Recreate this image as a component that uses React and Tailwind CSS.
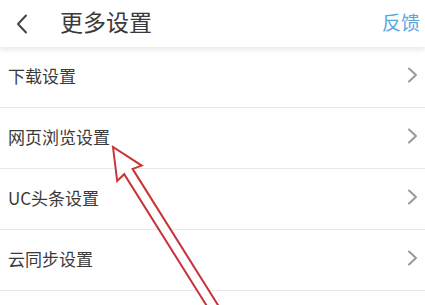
import React from "react";

const rows = ["下载设置", "网页浏览设置", "UC头条设置", "云同步设置", "其他设置"];

function Chevron() {
  return (
    <svg width="12" height="16" viewBox="0 0 12 16" className="shrink-0">
      <polyline points="2,1.5 9,8 2,14.5" fill="none" stroke="#9a9a9a" strokeWidth="2" strokeLinecap="round" strokeLinejoin="round" />
    </svg>
  );
}

export default function App() {
  return (
    <div
      className="relative w-[425px] h-[305px] overflow-hidden bg-white"
      style={{ fontFamily: '"Noto Sans CJK SC", "Noto Sans", sans-serif' }}
    >
      <div className="relative z-10 flex h-[47px] items-center bg-white pl-[16px] pr-[5px] shadow-[0_3px_5px_rgba(0,0,0,0.09)]">
        <svg width="12" height="20" viewBox="0 0 12 20" className="shrink-0">
          <polyline points="10,1.5 2,10 10,18.5" fill="none" stroke="#444" strokeWidth="2" strokeLinecap="round" strokeLinejoin="round" />
        </svg>
        <div className="ml-[32px] text-[23px] leading-none text-[#3a3a3a] pb-[4px]">更多设置</div>
        <div className="ml-auto text-[19px] leading-none text-[#5aa7dd] pb-[4px]">反馈</div>
      </div>
      <div className="flex flex-col">
        {rows.map((r) => (
          <div key={r} className="flex h-[61px] shrink-0 items-center border-b border-[#e8e8e8] pl-[8px] pr-[6px] pb-[4px]">
            <span className="text-[17px] leading-none text-[#3a3a3a]">{r}</span>
            <span className="ml-auto"><Chevron /></span>
          </div>
        ))}
      </div>
      <svg className="absolute left-0 top-0 z-20 pointer-events-none" width="425" height="305" viewBox="0 0 425 305">
        <polygon
          points="113,147 117.2,181 124.2,174.2 215,319 223.4,313.7 132.6,168.9 141.7,165.6"
          fill="#ffffff"
          stroke="#c9343a"
          strokeWidth="2"
          strokeLinejoin="miter"
        />
      </svg>
    </div>
  );
}
